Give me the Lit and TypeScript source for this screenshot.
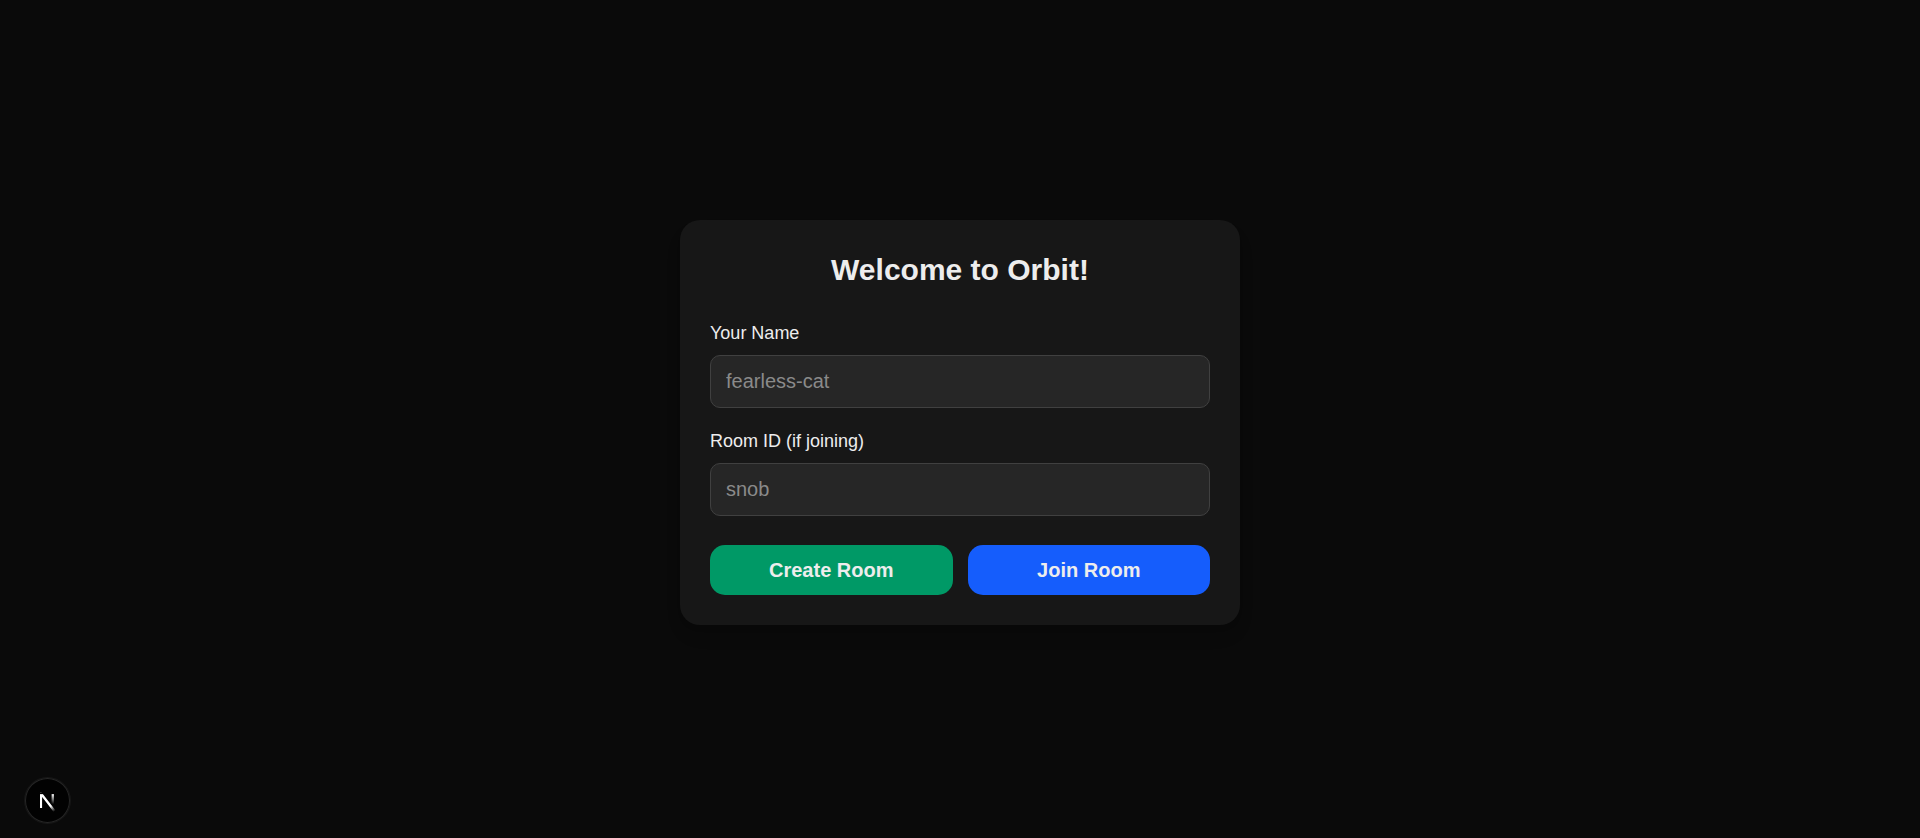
import { LitElement, html, css } from "lit";
import { customElement, state } from "lit/decorators.js";

@customElement("dev-indicator")
export class DevIndicator extends LitElement {
  static styles = css`
    :host {
      display: block;
    }
    .badge {
      display: flex;
      align-items: center;
      justify-content: center;
      width: 45px;
      height: 45px;
      padding: 0;
      border: 0;
      border-radius: 50%;
      background: rgba(0, 0, 0, 0.8);
      box-shadow:
        0 0 0 1px #171717,
        inset 0 0 0 1px rgba(255, 255, 255, 0.14);
      cursor: pointer;
    }
    .mark {
      display: block;
      flex: none;
      width: 50px;
      height: 50px;
    }
  `;

  render() {
    return html`
      <button class="badge" type="button" aria-label="Open Next.js Dev Tools">
        <svg class="mark" viewBox="0 0 40 40" fill="none" aria-hidden="true">
          <defs>
            <linearGradient id="diagonal" x1="9.95555" y1="11.1226" x2="15.4778" y2="17.9671" gradientUnits="userSpaceOnUse">
              <stop stop-color="white" />
              <stop offset="0.604072" stop-color="white" stop-opacity="0" />
              <stop offset="1" stop-color="white" stop-opacity="0" />
            </linearGradient>
            <linearGradient id="stem" x1="11.8222" y1="1.40039" x2="11.791" y2="9.62542" gradientUnits="userSpaceOnUse">
              <stop stop-color="white" />
              <stop offset="1" stop-color="white" stop-opacity="0" />
            </linearGradient>
            <mask id="cap">
              <rect width="100%" height="100%" fill="white" />
              <rect width="5" height="1.5" fill="black" />
            </mask>
          </defs>
          <g transform="translate(12 13)">
            <path d="M13.3 15.2 L2.34 1 V12.6" stroke="url(#diagonal)" stroke-width="1.86" mask="url(#cap)" />
            <path d="M11.825 1.5 V13.1" stroke="url(#stem)" stroke-width="1.86" />
          </g>
        </svg>
      </button>
    `;
  }
}

@customElement("app-root")
export class AppRoot extends LitElement {
  @state() private name = "";
  @state() private room = "";

  static styles = css`
    :host {
      display: block;
      background: #0a0a0a;
      color: #ededed;
      font-family: "Liberation Sans", Arial, Helvetica, sans-serif;
      font-size: 20px;
      line-height: 30px;
    }
    * {
      box-sizing: border-box;
    }
    .page {
      display: flex;
      align-items: center;
      justify-content: center;
      min-height: 100vh;
      padding: 7px 20px 0;
    }
    .card {
      width: 100%;
      max-width: 560px;
      padding: 30px;
      border-radius: 20px;
      background: #171717;
      box-shadow:
        0 12px 19px -4px rgba(0, 0, 0, 0.1),
        0 5px 8px -5px rgba(0, 0, 0, 0.1);
    }
    .title {
      margin: 0 0 30px;
      font-size: 30px;
      line-height: 40px;
      font-weight: 700;
      text-align: center;
    }
    .fields {
      display: grid;
      gap: 20px;
    }
    .field {
      display: grid;
      gap: 8px;
    }
    .label {
      font-size: 18px;
      line-height: 27px;
    }
    .input {
      width: 100%;
      height: 53px;
      margin: 0;
      padding: 10px 15px;
      border: 1px solid #404040;
      border-radius: 10px;
      background: #262626;
      color: inherit;
      font: inherit;
      outline: none;
    }
    .input::placeholder {
      color: #8a8a8a;
      opacity: 1;
    }
    .input:focus-visible {
      border-color: #155dfc;
    }
    .actions {
      display: flex;
      gap: 15px;
      margin-top: 29px;
    }
    .button {
      flex: 1;
      margin: 0;
      padding: 10px 20px;
      border: 0;
      border-radius: 15px;
      color: inherit;
      font: inherit;
      font-weight: 600;
      cursor: pointer;
    }
    .create {
      background: #009966;
    }
    .join {
      background: #155dfc;
    }
    .dev {
      position: fixed;
      left: 25px;
      bottom: 15px;
    }
  `;

  render() {
    return html`
      <main class="page">
        <form class="card" @submit=${(e: Event) => e.preventDefault()}>
          <h1 class="title">Welcome to Orbit!</h1>
          <div class="fields">
            <div class="field">
              <label class="label" for="name">Your Name</label>
              <input
                class="input"
                id="name"
                type="text"
                placeholder="fearless-cat"
                autocomplete="off"
                .value=${this.name}
                @input=${(e: Event) => (this.name = (e.target as HTMLInputElement).value)}
              />
            </div>
            <div class="field">
              <label class="label" for="room">Room ID (if joining)</label>
              <input
                class="input"
                id="room"
                type="text"
                placeholder="snob"
                autocomplete="off"
                .value=${this.room}
                @input=${(e: Event) => (this.room = (e.target as HTMLInputElement).value)}
              />
            </div>
          </div>
          <div class="actions">
            <button class="button create" type="button">Create Room</button>
            <button class="button join" type="submit">Join Room</button>
          </div>
        </form>
      </main>
      <dev-indicator class="dev"></dev-indicator>
    `;
  }
}
